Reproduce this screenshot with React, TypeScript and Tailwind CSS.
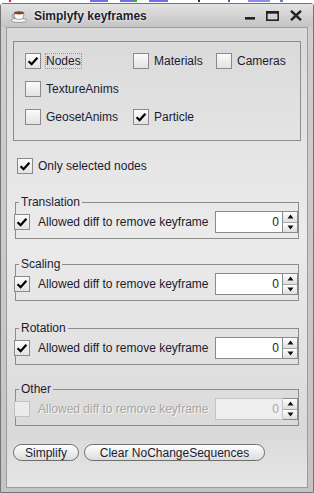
import React from "react";

const Check = ({ checked, disabled }: { checked?: boolean; disabled?: boolean }) => (
  <span
    className={`flex h-4 w-4 shrink-0 items-center justify-center border ${
      disabled
        ? "border-[#c2c2c2] bg-[#ececec]"
        : "border-[#8a8a8a] bg-linear-to-b from-[#fbfbfb] to-[#e3e3e3]"
    }`}
  >
    {checked && (
      <svg width="12" height="12" viewBox="0 0 12 12">
        <path d="M1.6 6.2 L4.6 9.2 L10.4 2.8" fill="none" stroke="#000" strokeWidth="2.3" />
      </svg>
    )}
  </span>
);

const CheckItem = ({ label, checked, focus }: { label: string; checked?: boolean; focus?: boolean }) => (
  <div className="flex items-center gap-[5px]">
    <Check checked={checked} />
    <span className={focus ? "outline outline-1 outline-dotted outline-[#f07a3c]" : ""}>{label}</span>
  </div>
);

const Spinner = ({ disabled }: { disabled?: boolean }) => (
  <div className="flex h-[22px]">
    <div
      className={`flex w-[68px] items-center justify-end border pr-[3px] ${
        disabled ? "border-[#c4c4c4] bg-[#eeeeee] text-[#a9a9a9]" : "border-[#8a8a8a] bg-white"
      }`}
    >
      0
    </div>
    <div className="flex w-[15px] flex-col border border-l-0 border-[#8a8a8a]">
      <div className="flex flex-1 items-center justify-center border-b border-[#a8a8a8] bg-linear-to-b from-white to-[#dedede]">
        <svg width="7" height="6" viewBox="0 0 7 6">
          <path d="M3.5 0.5 L6.5 4.5 L0.5 4.5 Z" fill="#111" />
        </svg>
      </div>
      <div className="flex flex-1 items-center justify-center bg-linear-to-b from-white to-[#dedede]">
        <svg width="7" height="6" viewBox="0 0 7 6">
          <path d="M0.5 1.5 L6.5 1.5 L3.5 5.5 Z" fill="#111" />
        </svg>
      </div>
    </div>
  </div>
);

const Group = ({ title, disabled, top }: { title: string; disabled?: boolean; top: string }) => (
  <fieldset className={`mx-[8px] border border-[#8c8c8c] pb-[5px] ${top}`}>
    <legend className="ml-[3px] px-[2px] leading-[14px]">{title}</legend>
    <div className="flex items-center pt-[2px]">
      <span className="-ml-[2px]">
        <Check checked={!disabled} disabled={disabled} />
      </span>
      <span className={`ml-[8px] ${disabled ? "text-[#a6a6a6] [text-shadow:1px_1px_0_#f6f6f6]" : ""}`}>
        Allowed diff to remove keyframe
      </span>
      <span className="ml-auto">
        <Spinner disabled={disabled} />
      </span>
    </div>
  </fieldset>
);

const CoffeeIcon = () => (
  <svg width="18" height="14" viewBox="0 0 18 14">
    <ellipse cx="9" cy="11.4" rx="8" ry="2.1" fill="#f5f5f5" stroke="#8a8a8a" strokeWidth="0.8" />
    <path d="M4 3.8 L14 3.8 L13 9.6 Q9 11.6 5 9.6 Z" fill="#fbfbfb" stroke="#909090" strokeWidth="0.8" />
    <ellipse cx="9" cy="3.8" rx="5" ry="1.6" fill="#7b4726" />
    <path d="M4.4 5.3 Q1.4 5.3 2.1 7.4 Q2.9 9 5 8.5" fill="none" stroke="#8a8a8a" strokeWidth="1" />
  </svg>
);

const App = () => {
  return (
    <div className="flex h-[493px] w-[314px] flex-col overflow-hidden bg-white font-['Liberation_Sans',Arial,sans-serif] text-[12px] leading-[14px] text-[#1b1b32]">
      {/* bits of the window behind */}
      <div className="flex h-[3px] shrink-0 items-start">
        <span className="ml-[9px] h-[2px] w-[2px] bg-[#e02020]" />
        <span className="ml-[79px] h-[2px] w-[18px] bg-[#6d6df0]" />
        <span className="ml-[12px] h-[2px] w-[14px] bg-[#6d6df0]" />
        <span className="h-[2px] w-[3px] bg-[#30b030]" />
        <span className="ml-[12px] h-[2px] w-[19px] bg-[#6d6df0]" />
        <span className="ml-[30px] h-[2px] w-[2px] bg-[#333]" />
        <span className="ml-[28px] h-[2px] w-[2px] bg-[#4060c0]" />
        <span className="ml-[18px] h-[2px] w-[22px] bg-[#8a8af0]" />
        <span className="ml-[10px] h-[2px] w-[3px] bg-[#6080c0]" />
      </div>

      <div className="flex flex-1 flex-col rounded-t-[3px] border border-[#747474] bg-linear-to-b from-[#cfcfcf] to-[#c4c4c4] px-[5px] pb-[4px]">
        {/* title bar */}
        <div className="flex h-[23px] shrink-0 items-center bg-linear-to-b from-[#e2e2e2] to-[#c4c4c4] -mx-[5px] px-[5px]">
          <span className="ml-[4px] mt-[1px]">
            <CoffeeIcon />
          </span>
          <span className="ml-[6px] text-[12px] font-bold text-[#1c1c30] [text-shadow:0_0_3px_#ffffff]">
            Simplyfy keyframes
          </span>
          <div className="ml-auto mr-[6px] flex items-center gap-[11px]">
            <svg width="10" height="10" viewBox="0 0 10 10">
              <rect x="0" y="6" width="10" height="2.6" fill="#222" />
            </svg>
            <svg width="13" height="10" viewBox="0 0 13 10">
              <rect x="0.8" y="1.4" width="11.4" height="7.8" fill="none" stroke="#222" strokeWidth="1.6" />
              <rect x="0" y="0" width="13" height="2.6" fill="#222" />
            </svg>
            <svg width="12" height="11" viewBox="0 0 12 11">
              <path d="M1 0.8 L11 10.2 M11 0.8 L1 10.2" stroke="#222" strokeWidth="2.4" />
            </svg>
          </div>
        </div>

        {/* content */}
        <div className="flex flex-1 flex-col border border-[#9c9c9c] bg-[linear-gradient(180deg,#d9d9d9_0%,#e4e4e4_25%,#ebebeb_45%,#e2e2e2_70%,#d9d9d9_88%,#e6e6e6_100%)]">
          <div className="mx-[6px] mt-[13px] grid grid-cols-[108px_83px_auto] gap-y-[12px] border border-[#8c8c8c] pb-[15px] pl-[11px] pt-[11px]">
            <CheckItem label="Nodes" checked focus />
            <CheckItem label="Materials" />
            <CheckItem label="Cameras" />
            <CheckItem label="TextureAnims" />
            <div />
            <div />
            <CheckItem label="GeosetAnims" />
            <CheckItem label="Particle" checked />
          </div>

          <div className="ml-[10px] mt-[17px]">
            <CheckItem label="Only selected nodes" checked />
          </div>

          <Group title="Translation" top="mt-[21px]" />
          <Group title="Scaling" top="mt-[18px]" />
          <Group title="Rotation" top="mt-[20px]" />
          <Group title="Other" disabled top="mt-[17px]" />

          <div className="ml-[6px] mt-[18px] flex gap-[5px]">
            <button className="flex h-[17px] w-[66px] items-center justify-center rounded-full border border-[#6e6e6e] bg-linear-to-b from-white to-[#dcdcdc] text-[#1b1b32]">
              Simplify
            </button>
            <button className="flex h-[17px] w-[181px] items-center justify-center rounded-full border border-[#6e6e6e] bg-linear-to-b from-white to-[#dcdcdc] text-[#1b1b32]">
              Clear NoChangeSequences
            </button>
          </div>
        </div>
      </div>
    </div>
  );
};

export default App;
